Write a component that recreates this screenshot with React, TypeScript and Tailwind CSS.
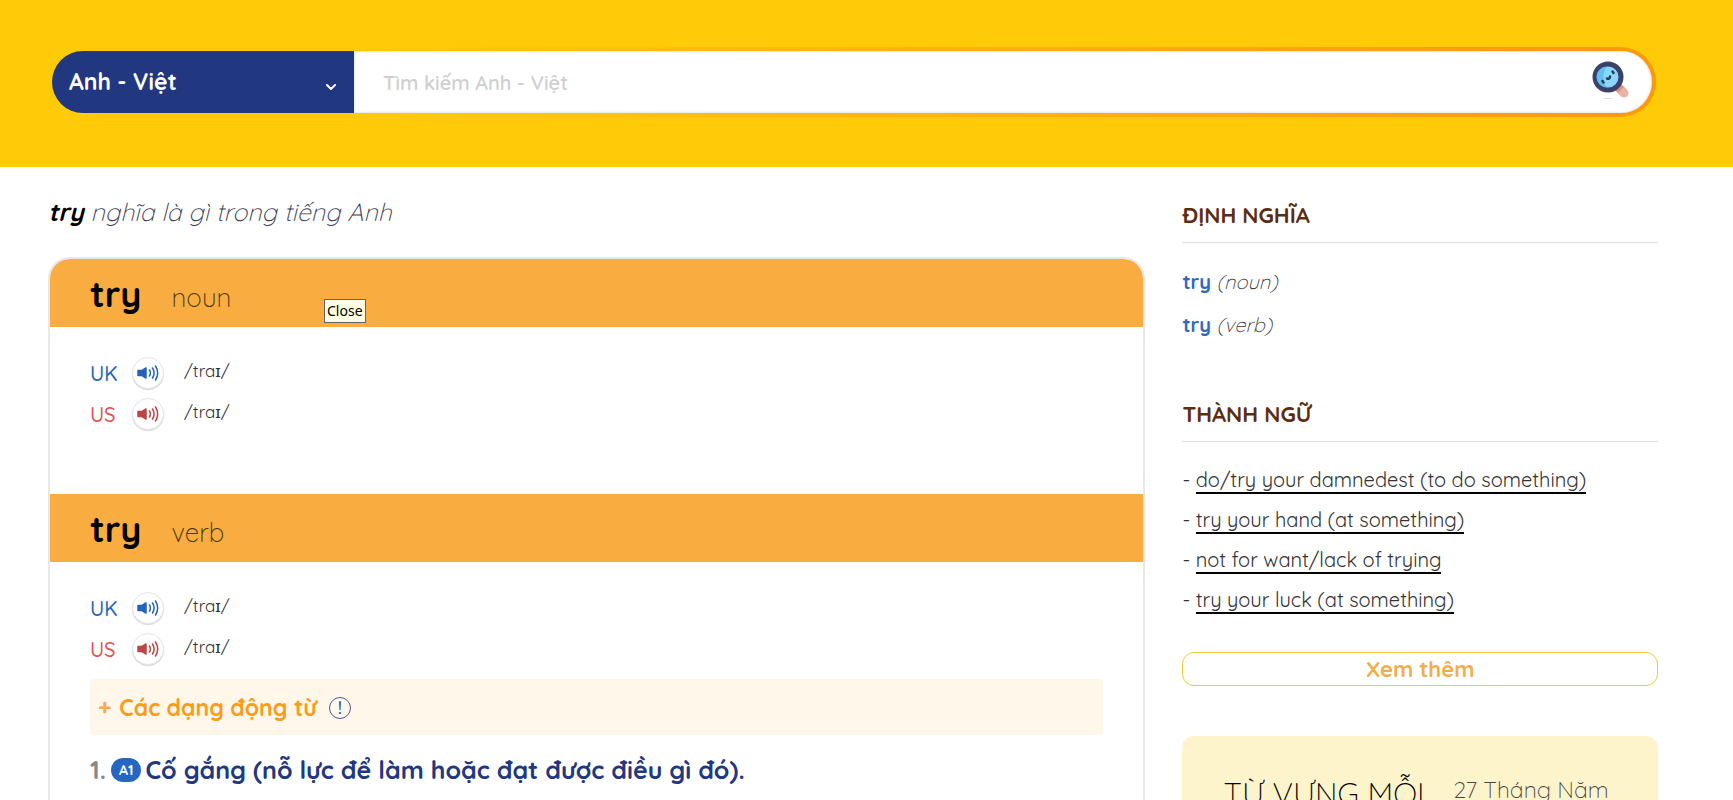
import { ChevronDown } from "lucide-react";

type Tone = "uk" | "us";

const idioms = [
  "do/try your damnedest (to do something)",
  "try your hand (at something)",
  "not for want/lack of trying",
  "try your luck (at something)",
];

const SearchIcon = () => (
  <svg viewBox="0 0 40 40" className="size-10" aria-hidden="true">
    <path d="M28 28 L33 33" stroke="#ecb3a2" strokeWidth="9" strokeLinecap="round" />
    <path d="M25 25 L30 30" stroke="#dc9484" strokeWidth="8" />
    <circle cx="17" cy="17" r="13" fill="#8bd6fb" stroke="#3b4169" strokeWidth="5" />
    <path d="M16 6.500a10.500 10.500 0 0 0 0 21 17 17 0 0 1 0-21" fill="#62c0f0" />
    <path d="M11.500 21l1 1.500M21.500 11.500l1 1.500" stroke="#23404f" strokeWidth="2.500" strokeLinecap="round" />
    <path d="M16 18.500c1.500 1 3-.5 3-2" fill="none" stroke="#23404f" strokeWidth="2.500" strokeLinecap="round" />
    <path d="M13 38.500h8" stroke="#dddddd" strokeWidth="1" />
  </svg>
);

const SpeakerIcon = () => (
  <svg viewBox="0 0 24 18" className="h-[18px] w-6" fill="none" stroke="currentColor" aria-hidden="true">
    <path d="M2 6.500h4l4-2.500v10l-4-2.500H2z" fill="currentColor" strokeWidth="1.500" strokeLinejoin="round" />
    <path d="M13.500 6q1.800 3 0 6M16.500 4q3.200 5 0 10M19.500 2q4.400 7 0 14" strokeWidth="1.500" strokeLinecap="round" />
  </svg>
);

const Pronunciation = ({ tone }: { tone: Tone }) => (
  <div className="flex h-[41px] items-center">
    <span className={`w-[42px] pt-[2px] text-xl font-medium ${tone === "uk" ? "text-[#2463bd]" : "text-[#e05252]"}`}>
      {tone === "uk" ? "UK" : "US"}
    </span>
    <button
      type="button"
      aria-label={tone === "uk" ? "UK" : "US"}
      className={`flex size-8 items-center justify-center rounded-full border border-gray-200 bg-white shadow-[0_1px_1px_#d4d4d4] ${
        tone === "uk" ? "text-[#2463bd]" : "text-[#bc4545]"
      }`}
    >
      <SpeakerIcon />
    </button>
    <span className="ml-5 pb-1 text-[17px] text-[#333]">
      /tra<span className="font-['Noto_Sans',sans-serif]">ɪ</span>/
    </span>
  </div>
);

const WordHeader = ({ kind }: { kind: string }) => (
  <div className="flex h-[68px] items-baseline gap-[30px] bg-[#f9ad40] px-10 pt-[13px]">
    <h2 className="text-4xl leading-[44px] font-bold text-black">try</h2>
    <span className="text-[26px] leading-[44px] font-light text-[#4a3512]">{kind}</span>
  </div>
);

const SideTitle = ({ children }: { children: string }) => (
  <h3 className="border-b border-[#dedede] pb-[11px] text-[22px] leading-8 font-bold text-[#5b2e12]">{children}</h3>
);

export default function App() {
  return (
    <div className="h-screen overflow-hidden bg-white font-['Quicksand','Lato','Open_Sans',sans-serif]">
      <header className="bg-[#ffcb08] pt-[47px] pr-[77px] pb-[50px] pl-12">
        <form className="flex h-[70px] rounded-full bg-linear-to-r from-[#ffcb08] from-20% to-[#ff980c] p-1">
          <div className="relative w-[302px] shrink-0">
            <select
              aria-label="Anh - Việt"
              className="h-full w-full appearance-none rounded-l-full bg-[#21377f] pl-[17px] text-[23px] font-bold text-white outline-none"
            >
              <option>Anh - Việt</option>
            </select>
            <ChevronDown className="pointer-events-none absolute top-7 right-[15px] size-4 text-white" strokeWidth={3} />
          </div>
          <div className="flex flex-1 items-center rounded-r-full bg-white pr-[21px] shadow-[inset_0_0_3px_#ccc]">
            <input
              type="text"
              aria-label="Tìm kiếm"
              placeholder="Tìm kiếm Anh - Việt"
              className="h-full flex-1 bg-transparent pl-[29px] text-xl font-semibold outline-none placeholder:text-[#cfcfcf]"
            />
            <button type="submit" aria-label="Tìm kiếm" className="pb-1">
              <SearchIcon />
            </button>
          </div>
        </form>
      </header>

      <main className="grid grid-cols-[30fr_13fr] items-start gap-[37px] pr-[75px] pl-12">
        <div>
          <h1 className="pt-[27px] text-[25px] leading-9 font-light text-[#3a3a55] italic">
            <b className="font-bold text-black">try</b> nghĩa là gì trong tiếng Anh
          </h1>

          <div className="mt-[27px] overflow-hidden rounded-t-[22px] border-2 border-[#e8e8e8]">
            <section className="relative">
              <WordHeader kind="noun" />
              <span className="absolute top-10 left-[274px] border border-[#666] bg-[#ffffe1] px-[2px] font-['Noto_Sans',sans-serif] text-sm leading-[22px] text-black">
                Close
              </span>
              <div className="px-10 pt-[25px] pb-[60px]">
                <Pronunciation tone="uk" />
                <Pronunciation tone="us" />
              </div>
            </section>

            <section>
              <WordHeader kind="verb" />
              <div className="px-10 pt-[25px] pb-10">
                <Pronunciation tone="uk" />
                <Pronunciation tone="us" />
                <div className="mt-[10px] flex h-14 items-center rounded-sm bg-[#fff7ea] px-2 pt-[2px] text-[23px] font-bold text-[#f99b1c]">
                  <button type="button" className="flex items-center gap-2">
                    <span className="text-[#f2ad4c]">+</span> Các dạng động từ
                  </button>
                  <span className="ml-3 flex size-[22px] items-center justify-center rounded-full border border-[#4c5796] text-lg font-medium text-[#21377f]">
                    !
                  </span>
                </div>
                <div className="mt-[15px] flex items-center text-[25px] leading-10 font-bold text-[#21377f]">
                  <span className="w-[21px] text-[#888]">1.</span>
                  <span className="mr-1 rounded-full bg-[#2567c0] px-2 text-sm leading-6 text-white">A1</span>
                  <h4>Cố gắng (nỗ lực để làm hoặc đạt được điều gì đó).</h4>
                </div>
              </div>
            </section>
          </div>
        </div>

        <aside className="pt-8">
          <SideTitle>ĐỊNH NGHĨA</SideTitle>
          <ul className="pt-[17px] text-xl leading-[43px]">
            {["noun", "verb"].map((kind) => (
              <li key={kind}>
                <a href="#" className="font-bold text-[#2f6abf]">
                  try
                </a>{" "}
                <i className="font-light text-[#333]">({kind})</i>
              </li>
            ))}
          </ul>

          <div className="pt-[52px]">
            <SideTitle>THÀNH NGỮ</SideTitle>
            <ul className="pt-[18px] text-xl leading-10 text-[#333]">
              {idioms.map((idiom) => (
                <li key={idiom}>
                  -{" "}
                  <a href="#" className="border-b-2 border-black">
                    {idiom}
                  </a>
                </li>
              ))}
            </ul>
          </div>

          <button
            type="button"
            className="mt-8 h-[34px] w-full rounded-xl border border-[#ebcb3a] text-[22px] leading-8 font-bold text-[#f2ad4c]"
          >
            Xem thêm
          </button>

          <div className="mt-[50px] flex gap-5 rounded-xl bg-[#fef4cc] pt-9 pr-4 pb-10 pl-[41px]">
            <h3 className="w-[210px] text-[31px] leading-[44px] font-light text-black">TỪ VỰNG MỖI NGÀY</h3>
            <span className="text-[23px] leading-9 font-light whitespace-nowrap text-[#444]">27 Tháng Năm</span>
          </div>
        </aside>
      </main>
    </div>
  );
}
